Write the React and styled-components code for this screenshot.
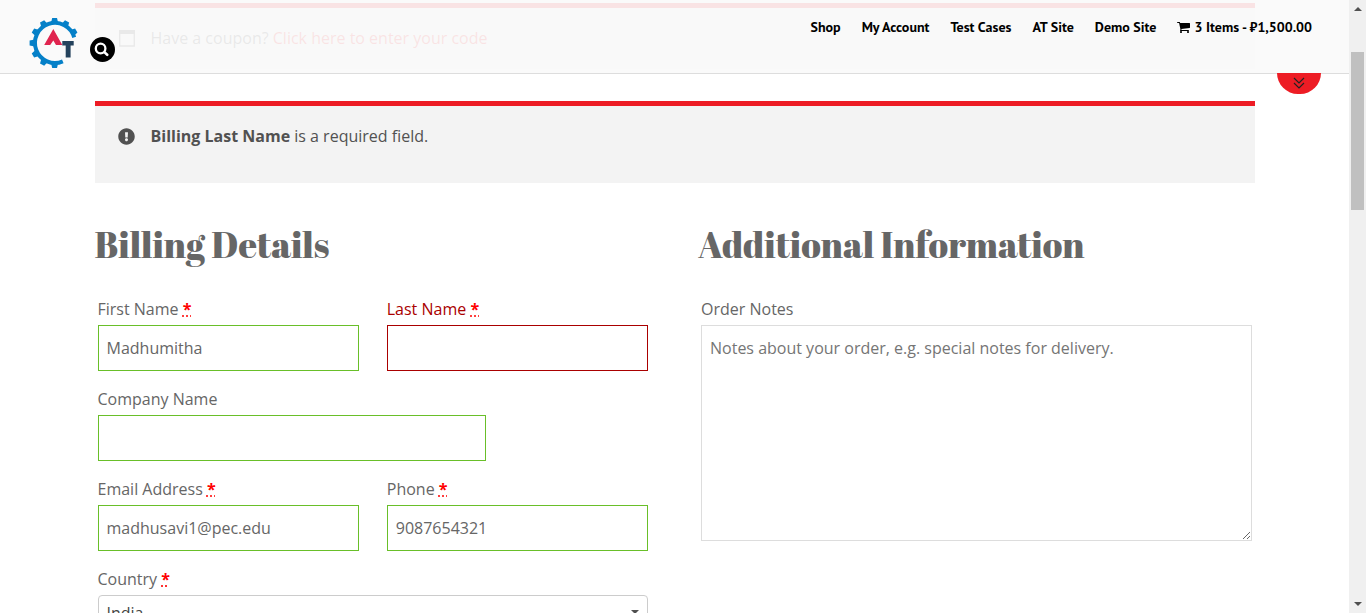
import React from "react";
import styled, { createGlobalStyle, css } from "styled-components";
import { FaExclamationCircle } from "react-icons/fa";

const GlobalStyle = createGlobalStyle`
  * { box-sizing: border-box; }
  body {
    margin: 0;
    background: #fff;
    color: #666;
    font: 16px/27px "Open Sans", "Noto Sans", sans-serif;
  }
`;

const Shell = styled.div`
  display: flex;
  height: 100vh;
  overflow: hidden;
`;

const Viewport = styled.div`
  position: relative;
  flex: 1;
  min-width: 0;
  overflow: hidden;
`;

const Header = styled.header`
  position: absolute;
  inset: 0 0 auto 0;
  z-index: 2;
  display: flex;
  align-items: flex-start;
  height: 74px;
  padding: 17px 37px 0 28px;
  background: rgba(250, 250, 250, 0.9);
  border-bottom: 1px solid #ddd;
`;

const LogoLink = styled.a`
  display: block;
  height: 52px;
`;

const SearchButton = styled.button`
  display: flex;
  align-items: center;
  justify-content: center;
  width: 25px;
  height: 25px;
  margin: 20px 0 0 10px;
  padding: 0 2px 0 0;
  border: 0;
  border-radius: 50%;
  background: #000;
`;

const Nav = styled.nav`
  display: flex;
  gap: 21px;
  margin-left: auto;
`;

const NavLink = styled.a`
  display: flex;
  align-items: center;
  gap: 4px;
  color: #000;
  font: bold 14px/20px "PT Sans", Lato, sans-serif;
  text-decoration: none;
  white-space: nowrap;
`;

const Toggle = styled.button`
  position: absolute;
  top: 73px;
  right: 28px;
  z-index: 3;
  width: 44px;
  height: 21px;
  padding: 0 0 2px;
  border: 0;
  border-radius: 0 0 22px 22px;
  background: #ed1c24;
  display: flex;
  align-items: center;
  justify-content: center;
`;

const Content = styled.main`
  width: 86%;
  max-width: 1160px;
  margin: 0 auto;
  padding-top: 3px;
`;

const Notice = styled.div`
  display: flex;
  align-items: flex-start;
  gap: 16px;
  min-height: ${(p) => (p.$tall ? 82 : 66)}px;
  margin-bottom: ${(p) => (p.$tall ? 40 : 32)}px;
  padding: 17px 24px 16px;
  border-top: 5px solid #ed1c24;
  background: #f3f3f3;
  color: #515151;

  strong { font-weight: 700; }
  a { color: #ed1c24; text-decoration: none; }
`;

const NoticeIcon = styled.span`
  display: flex;
  align-items: center;
  justify-content: center;
  width: 16px;
  height: 26px;

  svg { flex: none; }
`;

const Columns = styled.form`
  display: grid;
  grid-template-columns: 1fr 1fr;
  column-gap: 47px;
`;

const Title = styled.h2`
  margin: 0 0 28px;
  font: 400 36px/42px "Abril Fatface", "Liberation Serif", serif;
`;

const Fields = styled.div`
  display: flex;
  flex-direction: column;
  gap: 12px;
  padding: 0 3px;
`;

const Row = styled.div`
  display: grid;
  grid-template-columns: 1fr 1fr;
  column-gap: 28px;
`;

const Field = styled.div`
  display: flex;
  flex-direction: column;
  width: ${(p) => p.$width || "100%"};
`;

const Label = styled.label`
  line-height: 32px;
  color: ${(p) => (p.$invalid ? "#a00" : "#666")};
`;

const Required = styled.abbr`
  color: #f00;
  font-weight: 700;
  text-decoration: underline dotted;
`;

const control = css`
  width: 100%;
  margin: 0;
  border: 1px solid #ddd;
  border-radius: 0;
  background: #fff;
  color: #666;
  font: inherit;
  outline: 0;
`;

const Input = styled.input`
  ${control}
  height: 46px;
  padding: 0 8px;
  border-color: ${(p) => (p.$invalid ? "#a00" : "#69bf29")};
`;

const Notes = styled.textarea`
  ${control}
  display: block;
  height: 216px;
  padding: 9px 8px;
  resize: vertical;
  &::placeholder { color: #757575; }
`;

const SelectBox = styled.div`
  position: relative;
  svg {
    position: absolute;
    top: 15px;
    right: 9px;
    pointer-events: none;
  }
`;

const Select = styled.select`
  ${control}
  appearance: none;
  height: 36px;
  padding: 0 8px;
  border-color: #ccc;
  border-radius: 4px;
  color: #444;
`;

const Scrollbar = styled.div`
  display: flex;
  flex-direction: column;
  align-items: center;
  justify-content: space-between;
  flex: 0 0 17px;
  padding: 7px 0;
  background: #f0f0f0;
`;

const Thumb = styled.div`
  width: 13px;
  height: 158px;
  margin: 41px 0 auto;
  background: #c0c0c0;
`;

const TEETH = [-30, -60, -90, -120, -150, 180, 150, 120, 90];

function Logo() {
  return (
    <svg width="52" height="52" viewBox="0 0 52 52" aria-hidden="true">
      <path d="M46.2 20.4 A20 20 0 1 0 34.8 44.3" fill="none" stroke="#0580c8" strokeWidth="4" />
      {TEETH.map((a) => (
        <path key={a} d="M20 -3.6 L25 -2.4 V2.4 L20 3.6Z" fill="#0580c8" transform={`translate(26.6 26) rotate(${a})`} />
      ))}
      <path d="M25.3 12 L34.3 28 H28 L25.3 23.5 L22.2 28 H16.2Z" fill="#e0244f" />
      <path d="M34.3 24 H45.7 V28.4 H42.6 V40.6 H37.7 V28.4 H34.3Z" fill="#24425c" />
    </svg>
  );
}

function CartIcon() {
  return (
    <svg width="13" height="14" viewBox="0 0 1664 1792" fill="currentColor" aria-hidden="true">
      <path d="M640 1536q0 52-38 90t-90 38-90-38-38-90 38-90 90-38 90 38 38 90zm896 0q0 52-38 90t-90 38-90-38-38-90 38-90 90-38 90 38 38 90zm128-1088v512q0 24-16.500 42.500t-40.500 21.500l-1044 122q13 60 13 70 0 16-24 64h920q26 0 45 19t19 45-19 45-45 19h-1024q-26 0-45-19t-19-45q0-11 8-31.500t16-36 21.500-40 15.500-29.500l-177-823h-204q-26 0-45-19t-19-45 19-45 45-19h256q16 0 28.500 6.500t19.500 15.500 13 24.500 8 26 5.500 29.500 4.500 26h1201q26 0 45 19t19 45z" />
    </svg>
  );
}

function Arrow({ down }) {
  return (
    <svg width="8" height="4" viewBox="0 0 8 4" aria-hidden="true">
      <path d={down ? "M0 0H8L4 4Z" : "M0 4H8L4 0Z"} fill="#505050" />
    </svg>
  );
}

function TextField({ id, label, required, invalid, width, ...rest }) {
  return (
    <Field $width={width}>
      <Label htmlFor={id} $invalid={invalid}>
        {label} {required && <Required title="required">*</Required>}
      </Label>
      <Input id={id} $invalid={invalid} aria-invalid={invalid} {...rest} />
    </Field>
  );
}

export default function App() {
  return (
    <Shell>
      <GlobalStyle />
      <Viewport>
        <Header>
          <LogoLink href="#" aria-label="Home"><Logo /></LogoLink>
          <SearchButton type="button" aria-label="Search">
            <svg width="15" height="15" viewBox="0 0 15 15" fill="none" stroke="#fff" strokeLinecap="round">
              <circle cx="6.600" cy="6.500" r="4.800" strokeWidth="2.300" />
              <path d="M10.600 10.400 L13.200 12.800" strokeWidth="2.600" />
            </svg>
          </SearchButton>
          <Nav>
            <NavLink href="#">Shop</NavLink>
            <NavLink href="#">My Account</NavLink>
            <NavLink href="#">Test Cases</NavLink>
            <NavLink href="#">AT Site</NavLink>
            <NavLink href="#">Demo Site</NavLink>
            <NavLink href="#"><CartIcon />3 Items - ₽1,500.00</NavLink>
          </Nav>
        </Header>
        <Toggle type="button" aria-label="Expand">
          <svg width="12" height="12" viewBox="0 0 12 12" fill="none" stroke="#222" strokeWidth="1.200">
            <path d="M1 1 L6 6 L11 1 M1 6 L6 11 L11 6" />
          </svg>
        </Toggle>

        <Content>
          <Notice>
            <NoticeIcon>
              <svg width="16" height="17" viewBox="0 0 16 17" aria-hidden="true">
                <path d="M.7 1H15.300V16H.7Z" fill="none" stroke="#515151" strokeWidth="1.300" />
                <path d="M0 0H16V4H0Z" fill="#515151" />
              </svg>
            </NoticeIcon>
            <span>Have a coupon? <a href="#">Click here to enter your code</a></span>
          </Notice>
          <Notice $tall role="alert">
            <NoticeIcon><FaExclamationCircle size={17} /></NoticeIcon>
            <span><strong>Billing Last Name</strong> is a required field.</span>
          </Notice>

          <Columns>
            <section>
              <Title>Billing Details</Title>
              <Fields>
                <Row>
                  <TextField id="first" label="First Name" required defaultValue="Madhumitha" />
                  <TextField id="last" label="Last Name" required invalid />
                </Row>
                <TextField id="company" label="Company Name" width="70.500%" />
                <Row>
                  <TextField id="email" label="Email Address" required type="email" defaultValue="madhusavi1@pec.edu" />
                  <TextField id="phone" label="Phone" required type="tel" defaultValue="9087654321" />
                </Row>
                <Field>
                  <Label htmlFor="country">Country <Required title="required">*</Required></Label>
                  <SelectBox>
                    <Select id="country" defaultValue="India"><option>India</option></Select>
                    <Arrow down />
                  </SelectBox>
                </Field>
              </Fields>
            </section>
            <section>
              <Title>Additional Information</Title>
              <Fields>
                <Field>
                  <Label htmlFor="notes">Order Notes</Label>
                  <Notes id="notes" placeholder="Notes about your order, e.g. special notes for delivery." />
                </Field>
              </Fields>
            </section>
          </Columns>
        </Content>
      </Viewport>
      <Scrollbar aria-hidden="true">
        <Arrow />
        <Thumb />
        <Arrow down />
      </Scrollbar>
    </Shell>
  );
}
